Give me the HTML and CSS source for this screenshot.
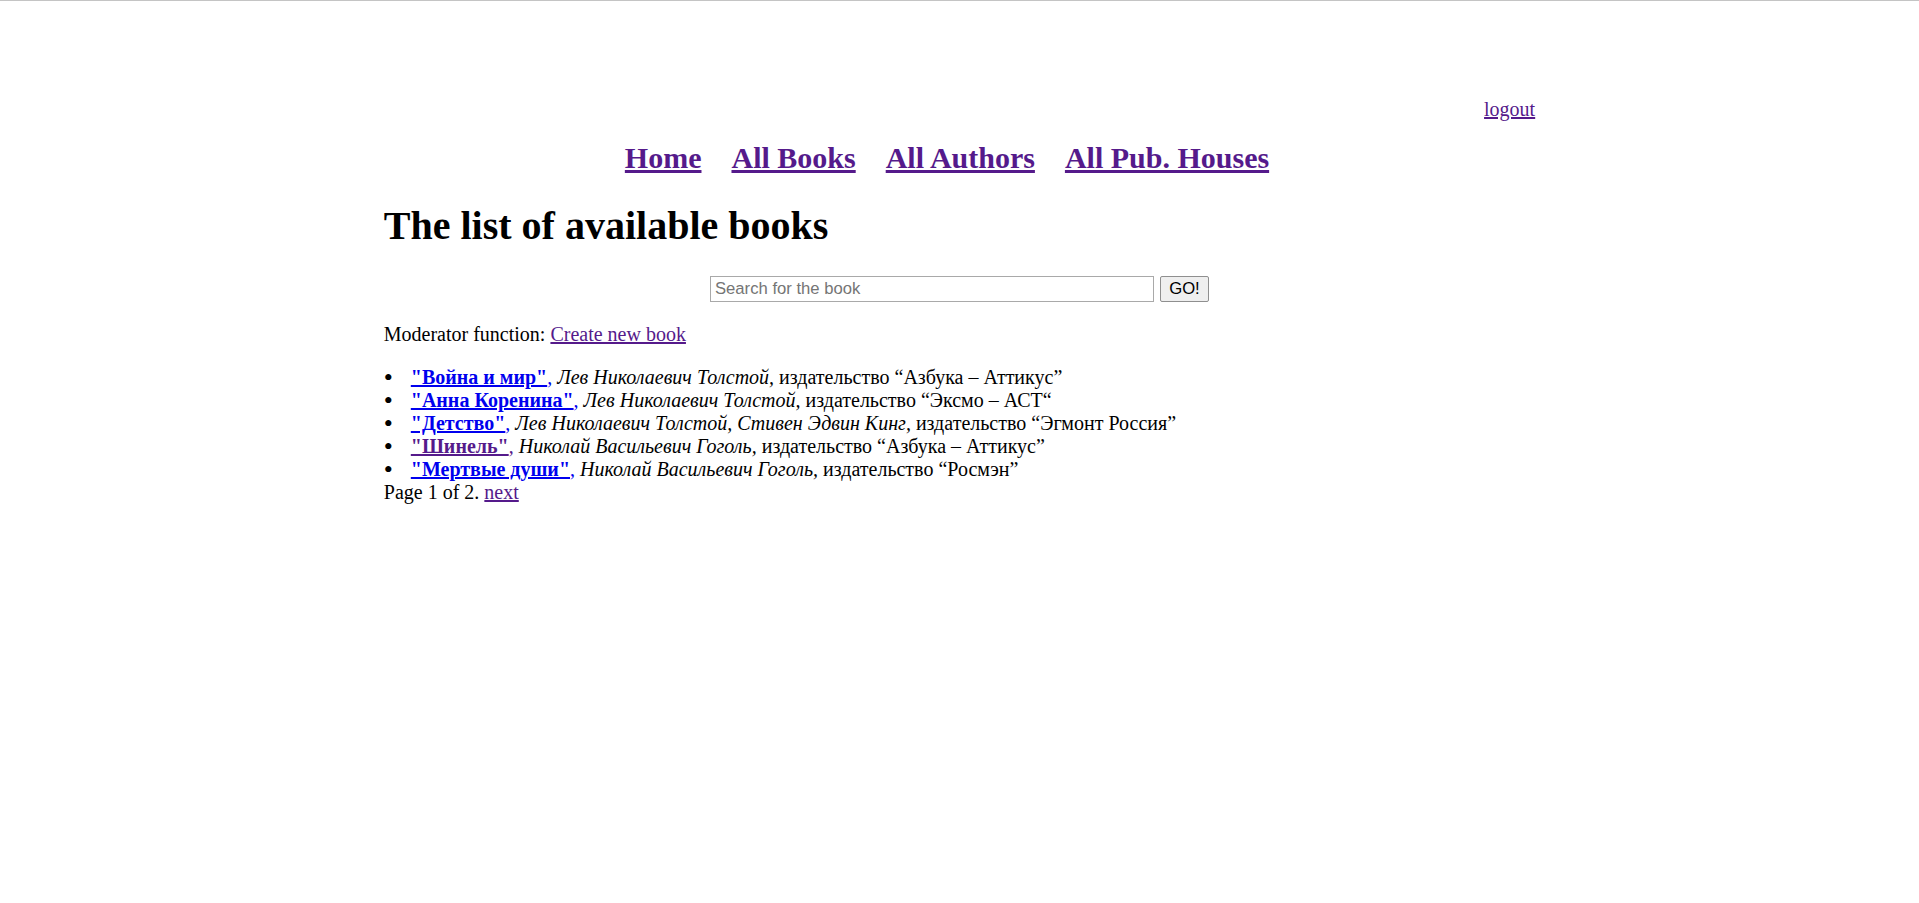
FILE: index.html
```html
<!DOCTYPE html>
<html lang="ru">
<head>
<meta charset="utf-8">
<title>Books</title>
<link rel="stylesheet" href="styles.css">
</head>
<body>
<div class="topline"></div>
<div class="page">
  <div class="account"><a class="visited" href="#">logout</a></div>
  <nav class="mainnav">
    <a class="visited" href="#">Home</a>
    <a class="visited" href="#">All Books</a>
    <a class="visited" href="#">All Authors</a>
    <a class="visited" href="#">All Pub. Houses</a>
  </nav>
  <h1 class="title">The list of available books</h1>
  <form class="search">
    <input class="search-input" type="text" placeholder="Search for the book">
    <button class="search-btn" type="button">GO!</button>
  </form>
  <p class="moderator">Moderator function: <a class="visited" href="#">Create new book</a></p>
  <ul class="books">
    <li><a class="book" href="#"><span class="book-title">"Война и мир"</span>,</a> <i>Лев Николаевич Толстой,</i> издательство “Азбука – Аттикус”</li>
    <li><a class="book" href="#"><span class="book-title">"Анна Коренина"</span>,</a> <i>Лев Николаевич Толстой,</i> издательство “Эксмо – АСТ“</li>
    <li><a class="book" href="#"><span class="book-title">"Детство"</span>,</a> <i>Лев Николаевич Толстой, Стивен Эдвин Кинг,</i> издательство “Эгмонт Россия”</li>
    <li><a class="book visited" href="#"><span class="book-title">"Шинель"</span>,</a> <i>Николай Васильевич Гоголь,</i> издательство “Азбука – Аттикус”</li>
    <li><a class="book" href="#"><span class="book-title">"Мертвые души"</span>,</a> <i>Николай Васильевич Гоголь,</i> издательство “Росмэн”</li>
  </ul>
  <p class="pager">Page 1 of 2. <a class="visited" href="#">next</a></p>
</div>
</body>
</html>
```

FILE: styles.css
```css
html, body {
  margin: 0;
  background: #fff;
}
body {
  font-family: "Liberation Serif", "Times New Roman", serif;
  font-size: 20px;
  line-height: 23px;
  color: #000;
}
.topline {
  height: 1px;
  background: #c4c4c4;
}
.page {
  width: 60%;
  margin: 0 auto;
}
a {
  color: #0000ee;
}
a.visited {
  color: #551a8b;
}
.account {
  margin-top: 97px;
  text-align: right;
}
.mainnav {
  margin-top: 20px;
  display: flex;
  justify-content: center;
  gap: 30px;
  padding-right: 25px;
  font-size: 30px;
  line-height: 34px;
  font-weight: bold;
}
.title {
  margin: 28px 0 0;
  font-size: 40px;
  line-height: 46px;
  font-weight: bold;
}
.search {
  margin: 27px 0 0;
  display: flex;
  justify-content: center;
  gap: 6px;
}
.search-input {
  box-sizing: border-box;
  width: 444px;
  height: 26px;
  margin: 0;
  padding: 1px 4px;
  border: 1px solid #a9a9a9;
  font-family: "Liberation Sans", Arial, sans-serif;
  font-size: 16.67px;
  color: #000;
  background: #fff;
}
.search-input::placeholder {
  color: #757575;
}
.search-btn {
  box-sizing: border-box;
  width: 49px;
  height: 26px;
  margin: 0;
  padding: 0;
  border: 1px solid #8f8f8f;
  border-radius: 2px;
  background: #efefef;
  font-family: "Liberation Sans", Arial, sans-serif;
  font-size: 16.67px;
  color: #000;
}
.moderator {
  margin: 21px 0 0;
}
.books {
  margin: 20px 0 0;
  padding: 0;
  list-style: none;
}
.books li::before {
  content: "•";
  display: inline-block;
  width: 27px;
  font-size: 26px;
  line-height: 23px;
  vertical-align: top;
}
.book {
  text-decoration: none;
}
.book-title {
  font-weight: bold;
  text-decoration: underline;
}
.pager {
  margin: 0;
}
```
